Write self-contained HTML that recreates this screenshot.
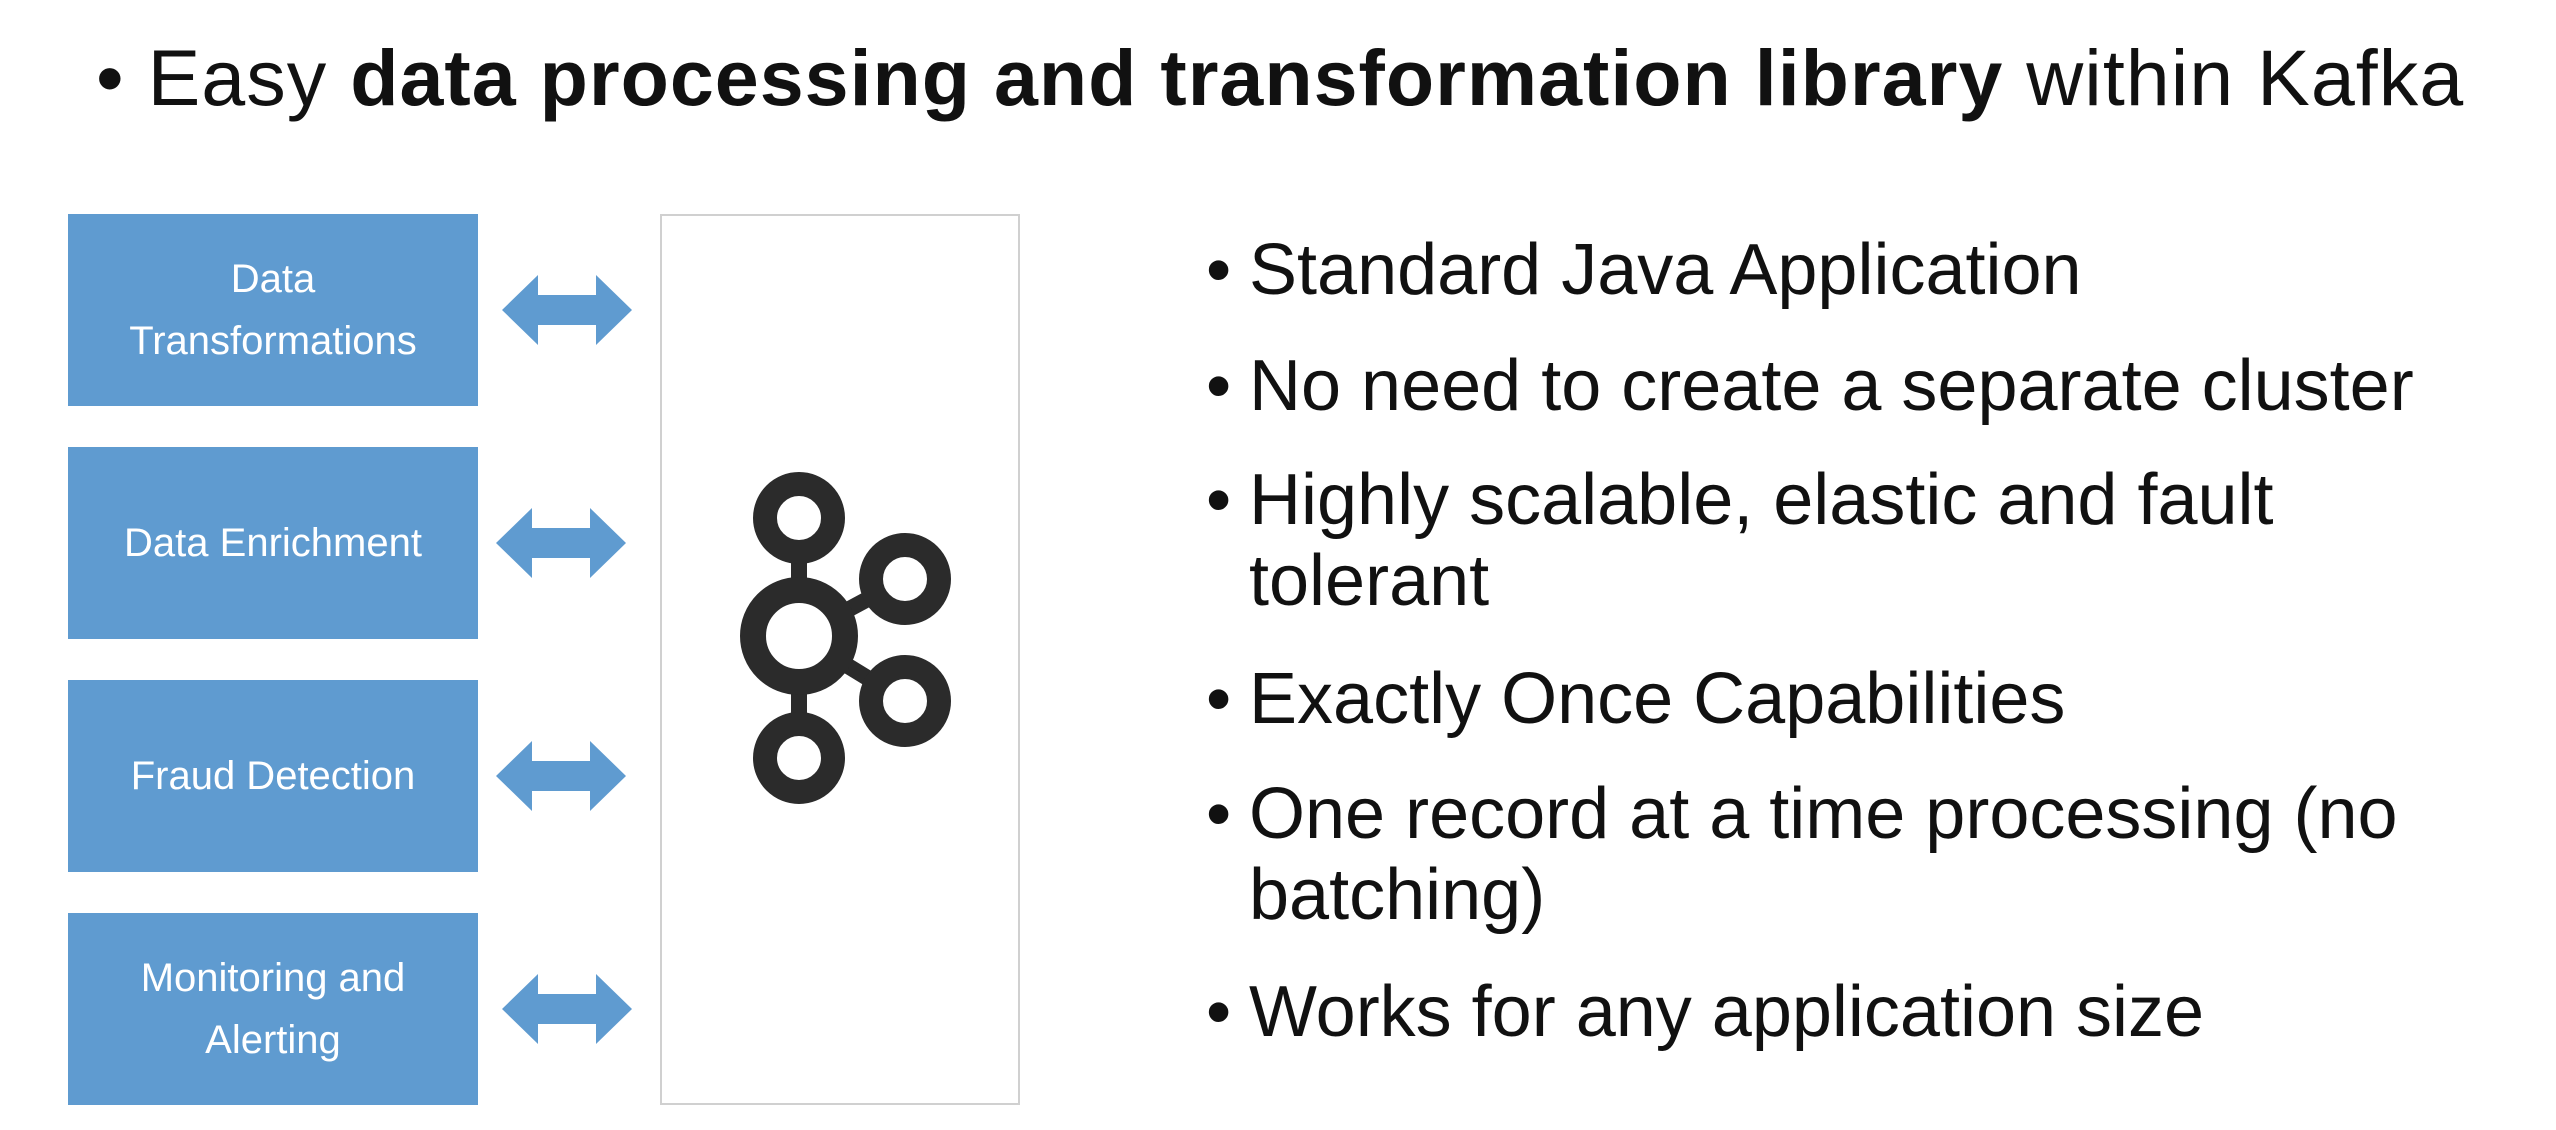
<!DOCTYPE html>
<html><head><meta charset="utf-8"><style>
html,body{margin:0;padding:0;background:#fff;}
body{width:2556px;height:1130px;position:relative;overflow:hidden;font-family:"Liberation Sans",sans-serif;color:#111;}
.t{position:absolute;white-space:nowrap;line-height:1;}
.box{position:absolute;left:68px;width:410px;height:192px;background:#5f9bd0;color:#fff;font-size:40px;display:flex;align-items:center;justify-content:center;text-align:center;line-height:1.55;}
.arr{position:absolute;left:500px;width:134px;height:74px;}
.li{position:absolute;left:1206px;font-size:72px;white-space:nowrap;line-height:1;}
.li b{font-weight:normal;display:inline-block;width:43px;}
</style></head><body>
<div class="t" style="left:96px;top:38px;font-size:79px;letter-spacing:1px;">• Easy <b>data processing and transformation library</b> within Kafka</div>

<div class="box" style="top:214px;">Data<br>Transformations</div>
<div class="box" style="top:447px;">Data Enrichment</div>
<div class="box" style="top:680px;">Fraud Detection</div>
<div class="box" style="top:913px;">Monitoring and<br>Alerting</div>

<svg class="arr" style="top:273px" viewBox="0 0 134 74"><path d="M2 37 L38 2 V22 H96 V2 L132 37 L96 72 V52 H38 V72 Z" fill="#5f9bd0"/></svg>
<svg class="arr" style="top:506px;left:494px" viewBox="0 0 134 74"><path d="M2 37 L38 2 V22 H96 V2 L132 37 L96 72 V52 H38 V72 Z" fill="#5f9bd0"/></svg>
<svg class="arr" style="top:739px;left:494px" viewBox="0 0 134 74"><path d="M2 37 L38 2 V22 H96 V2 L132 37 L96 72 V52 H38 V72 Z" fill="#5f9bd0"/></svg>
<svg class="arr" style="top:972px" viewBox="0 0 134 74"><path d="M2 37 L38 2 V22 H96 V2 L132 37 L96 72 V52 H38 V72 Z" fill="#5f9bd0"/></svg>

<div style="position:absolute;left:660px;top:214px;width:356px;height:887px;border:2px solid #d0d0d0;"></div>
<svg style="position:absolute;left:660px;top:214px" width="360" height="890">
<g stroke="#2b2b2b" fill="none">
<line x1="139" y1="304" x2="139" y2="544" stroke-width="16"/>
<line x1="139" y1="422" x2="245" y2="365" stroke-width="16"/>
<line x1="139" y1="422" x2="245" y2="487" stroke-width="16"/>
<circle cx="139" cy="422" r="46" stroke-width="26" fill="#fff"/>
<circle cx="139" cy="304" r="34" stroke-width="24" fill="#fff"/>
<circle cx="245" cy="365" r="34" stroke-width="24" fill="#fff"/>
<circle cx="245" cy="487" r="34" stroke-width="24" fill="#fff"/>
<circle cx="139" cy="544" r="34" stroke-width="24" fill="#fff"/>
</g></svg>

<div class="li" style="top:234px"><b>•</b>Standard Java Application</div>
<div class="li" style="top:350px"><b>•</b>No need to create a separate cluster</div>
<div class="li" style="top:464px"><b>•</b>Highly scalable, elastic and fault</div>
<div class="li" style="top:545px"><b></b>tolerant</div>
<div class="li" style="top:663px"><b>•</b>Exactly Once Capabilities</div>
<div class="li" style="top:778px"><b>•</b>One record at a time processing (no</div>
<div class="li" style="top:859px"><b></b>batching)</div>
<div class="li" style="top:976px"><b>•</b>Works for any application size</div>
</body></html>
